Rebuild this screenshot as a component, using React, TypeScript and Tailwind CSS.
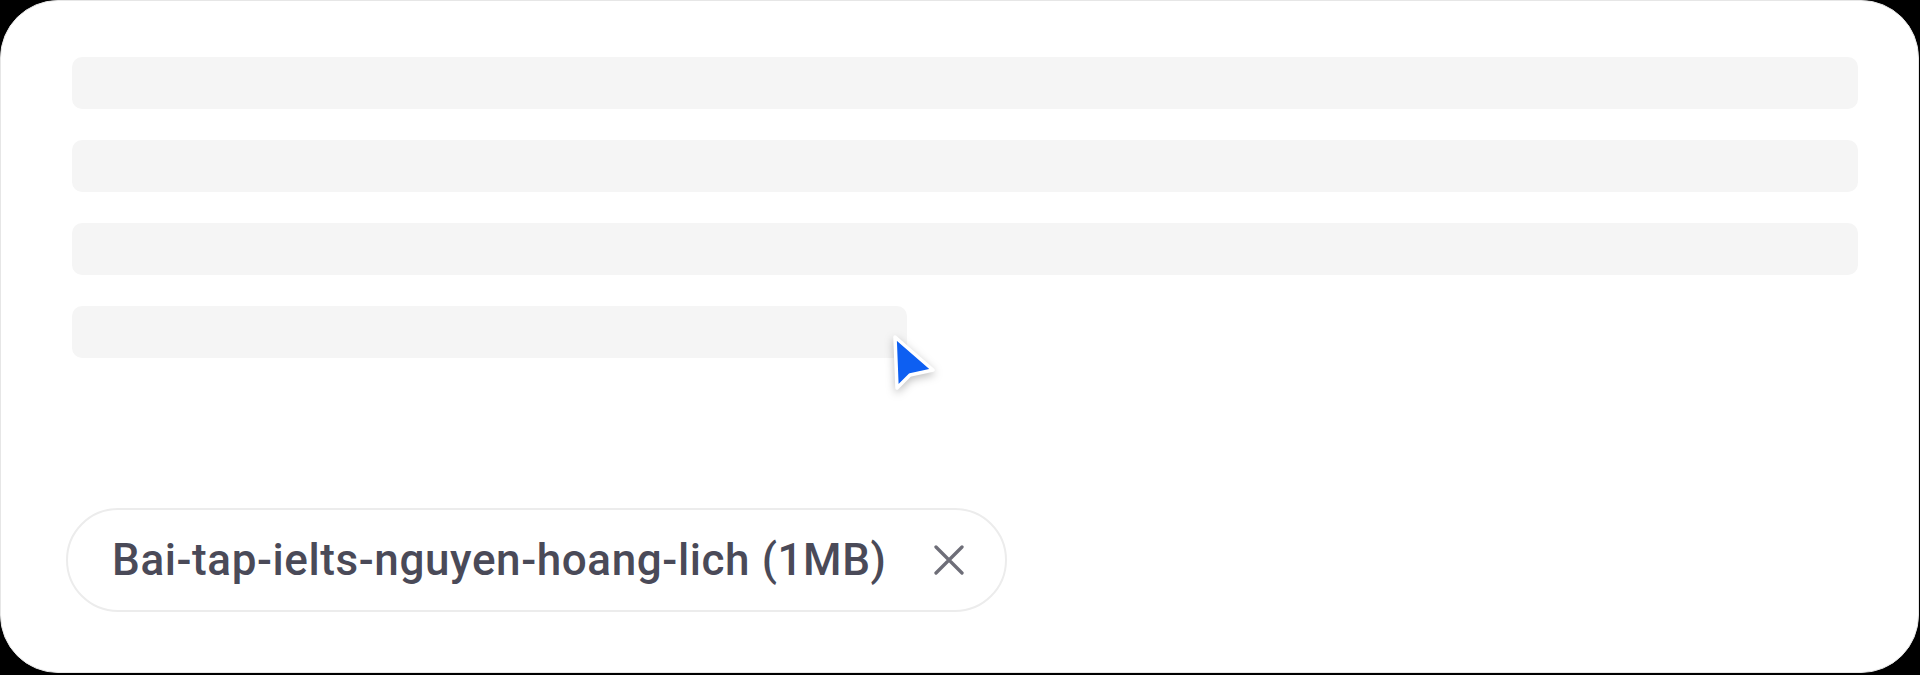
const bars = ["w-full", "w-full", "w-full", "w-[835px]"];

function Cursor() {
	return (
		<svg
			className="absolute left-[887px] top-[328px] drop-shadow-[0_3px_4px_rgba(0,0,0,0.25)]"
			width="56"
			height="68"
			viewBox="0 0 56 68"
		>
			<path
				d="M7 8 L45 41 L22 46 L9 59 Z"
				fill="#0d5ff2"
				stroke="#ffffff"
				strokeWidth="3.5"
				strokeLinejoin="round"
			/>
		</svg>
	);
}

export default function App() {
	return (
		<div className="h-[675px] w-[1920px] bg-black">
			<div className="relative flex h-[673px] w-[1919px] flex-col rounded-[58px] border border-[#e6e6e6] bg-white pt-[56px]">
				<div className="flex flex-col gap-[31px] pl-[71px] pr-[60px]">
					{bars.map((w, i) => (
						<div key={i} className={`${w} h-[52px] rounded-[10px] bg-[#f5f5f5]`} />
					))}
				</div>
				<Cursor />
				<div className="mt-auto mb-[60px] ml-[65px] flex h-[104px] w-fit items-center gap-[47px] rounded-full border-2 border-[#ececec] pl-[44px] pr-[41px]">
					<span className="font-['Roboto',sans-serif] text-[44px] font-medium tracking-[0.6px] text-[#4a4a58]">
						Bai-tap-ielts-nguyen-hoang-lich (1MB)
					</span>
					<svg width="30" height="30" viewBox="0 0 30 30" className="text-[#6e6e78]">
						<path
							d="M2 2 L28 28 M28 2 L2 28"
							stroke="currentColor"
							strokeWidth="3.3"
							strokeLinecap="round"
						/>
					</svg>
				</div>
			</div>
		</div>
	);
}
